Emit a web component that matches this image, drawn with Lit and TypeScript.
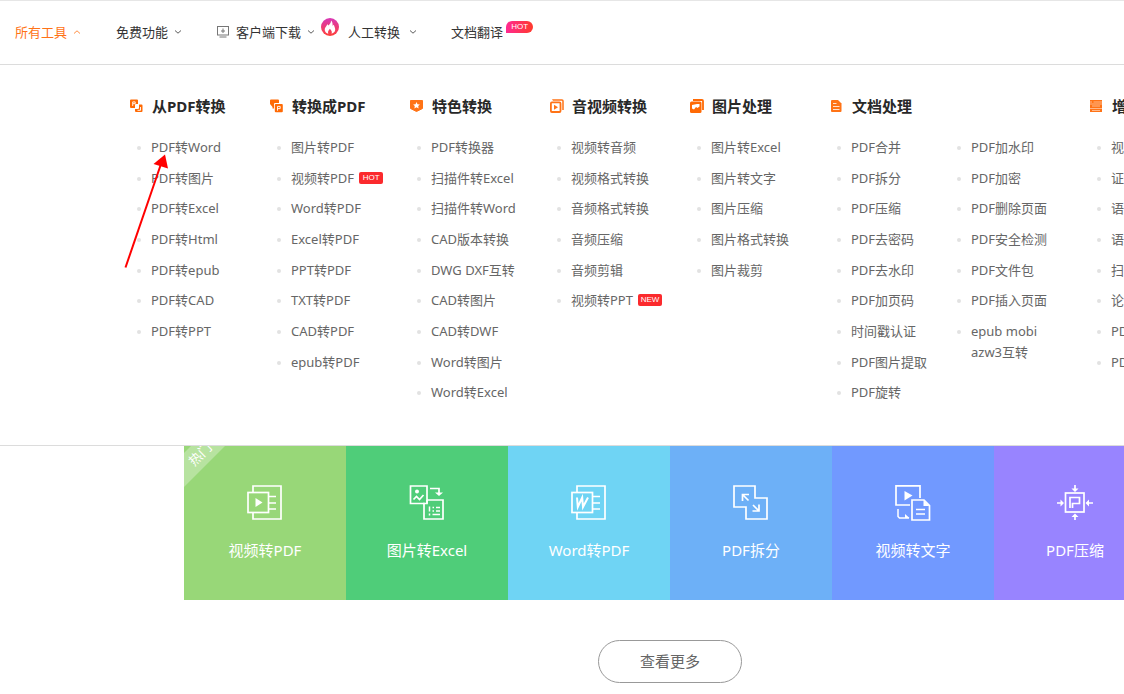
import { LitElement, html, svg, css, nothing, TemplateResult } from "lit";
import { customElement, property } from "lit/decorators.js";

interface MenuLink {
  label: string;
  tag?: string;
}

interface MenuColumn {
  title: string;
  icon: TemplateResult;
  lists: MenuLink[][];
}

interface Tile {
  label: string;
  tone: string;
  icon: TemplateResult;
  ribbon?: string;
}

const links = (...labels: string[]): MenuLink[] =>
  labels.map((entry) => {
    const [label, tag] = entry.split("|");
    return { label, tag };
  });

const glyph = (body: TemplateResult) => html`
  <svg width="14" height="14" viewBox="0 0 14 14" fill="none" aria-hidden="true">${body}</svg>
`;

const columns: MenuColumn[] = [
  {
    title: "从PDF转换",
    icon: glyph(svg`
      <path d="M1 .5h6a1 1 0 0 1 1 1V5H6a1 1 0 0 0-1 1v3H1a1 1 0 0 1-1-1V1.500a1 1 0 0 1 1-1z" fill="#ff6a05"/>
      <path d="M2.700 7V2.900h2.500v1.800H3" stroke="#fff" stroke-width=".9"/>
      <path d="M9 5.500h2.500a1 1 0 0 1 1 1V12a1 1 0 0 1-1 1H6a1 1 0 0 1-1-1v-2h3a1 1 0 0 0 1-1z" fill="#ff6a05"/>
      <path d="M7.500 11.300h3V8" stroke="#fff" stroke-width=".9"/>`),
    lists: [links("PDF转Word", "PDF转图片", "PDF转Excel", "PDF转Html", "PDF转epub", "PDF转CAD", "PDF转PPT")],
  },
  {
    title: "转换成PDF",
    icon: glyph(svg`
      <path d="M1 .5h7a1 1 0 0 1 1 1V4H5a1 1 0 0 0-1 1v4.500H2.500V8L0 5V1.500a1 1 0 0 1 1-1z" fill="#ff6a05"/>
      <path d="M5.800 5h6a1 1 0 0 1 1 1v6.200a1 1 0 0 1-1 1h-6a1 1 0 0 1-1-1V6a1 1 0 0 1 1-1z" fill="#ff6a05"/>
      <path d="M7.500 11.700V7.400h2.700v2.200H7.700" stroke="#fff" stroke-width=".9"/>`),
    lists: [
      links("图片转PDF", "视频转PDF|HOT", "Word转PDF", "Excel转PDF", "PPT转PDF", "TXT转PDF", "CAD转PDF", "epub转PDF"),
    ],
  },
  {
    title: "特色转换",
    icon: glyph(svg`
      <path d="M.5 1.500h12v8L6.500 12.500 .5 9.500z" fill="#ff7316" stroke="#ff7316" stroke-linejoin="round"/>
      <path d="m6.500 3 1 2.200 2.400.3-1.700 1.600.4 2.300-2.100-1.100-2.100 1.100.4-2.300-1.700-1.600 2.400-.3z" fill="#fff"/>`),
    lists: [
      links("PDF转换器", "扫描件转Excel", "扫描件转Word", "CAD版本转换", "DWG DXF互转", "CAD转图片", "CAD转DWF", "Word转图片", "Word转Excel"),
    ],
  },
  {
    title: "音视频转换",
    icon: glyph(svg`
      <path d="M3 1.200V1h9a1 1 0 0 1 1 1v9" stroke="#ff7316" stroke-width="1.500"/>
      <rect x=".9" y="3.400" width="9.600" height="9.600" rx="1" stroke="#ff7316" stroke-width="1.800"/>
      <path d="m4 5.700 4 2.500-4 2.500z" fill="#ff7316"/>`),
    lists: [links("视频转音频", "视频格式转换", "音频格式转换", "音频压缩", "音频剪辑", "视频转PPT|NEW")],
  },
  {
    title: "图片处理",
    icon: glyph(svg`
      <path d="M3 1h9a1 1 0 0 1 1 1v9" stroke="#ff6a05" stroke-width="1.800"/>
      <rect y="2.600" width="11.500" height="11.400" rx="1.500" fill="#ff6a05"/>
      <path d="M2 6 7 5h2.500v2.500L7.500 9 6 8 4 10.500 2 9.500z" fill="#fff"/>`),
    lists: [links("图片转Excel", "图片转文字", "图片压缩", "图片格式转换", "图片裁剪")],
  },
  {
    title: "文档处理",
    icon: glyph(svg`
      <path d="M2 1h6l3.500 3.500V12a1 1 0 0 1-1 1H2a1 1 0 0 1-1-1V2a1 1 0 0 1 1-1z" fill="#ff7316"/>
      <path d="M3 4.500h3.500M3 7.500h6.500M3 10.500h6.500" stroke="#fff" stroke-opacity=".8"/>`),
    lists: [
      links("PDF合并", "PDF拆分", "PDF压缩", "PDF去密码", "PDF去水印", "PDF加页码", "时间戳认证", "PDF图片提取", "PDF旋转"),
      links("PDF加水印", "PDF加密", "PDF删除页面", "PDF安全检测", "PDF文件包", "PDF插入页面", "epub mobi azw3互转"),
    ],
  },
  {
    title: "增",
    icon: glyph(svg`
      <path d="M0 1h12v3.700H0zM0 5.300h12V9H0zM0 9.500h12V13H0z" fill="#ff7316"/>
      <path d="M0 3h2M3.500 3H12M2 7h8M2 11.500h8" stroke="#fff" stroke-opacity=".5"/>`),
    lists: [links("视", "证", "语", "语", "扫", "论", "PDF", "PDF")],
  },
];

const picture = (body: TemplateResult) => html`
  <svg width="36" height="36" viewBox="0 0 36 36" fill="none" stroke="#fff" stroke-width="1.700" aria-hidden="true">
    ${body}
  </svg>
`;

const tiles: Tile[] = [
  {
    label: "视频转PDF",
    tone: "lime",
    ribbon: "热门",
    icon: picture(svg`
      <path d="M6 7V1h28v33H6v-6"/><rect x="1" y="7.500" width="20.500" height="20"/>
      <path d="M22 11.500h7M22 18h7M22 24h7"/><path d="m8.500 13 7 4.500-7 4.500z" fill="#fff" stroke="none"/>`),
  },
  {
    label: "图片转Excel",
    tone: "green",
    icon: picture(svg`
      <path d="M14 18.500H1.500V1H18v17.500M18 15h16v19H15V18.500H14"/><path d="M14 18.500h4V15"/>
      <circle cx="8" cy="6.500" r="2" fill="#fff" stroke="none"/><path d="m4.500 14.500 3-3 3 3 4-4.500"/>
      <path d="M21 3.500h9V8"/><path d="M26 7.500h8L30 11z" fill="#fff" stroke="none"/>
      <path d="M20.500 21.500v5M20.500 28.500v2" stroke-width="1.500"/><path d="M23.500 22.500H25M27 22.500h4M23.500 26H25M27 26h4M23.500 29.500H31" stroke-width="1.500"/>`),
  },
  {
    label: "Word转PDF",
    tone: "cyan",
    icon: picture(svg`
      <path d="M6 7V1h28v33H6v-6"/><rect x="1" y="7.500" width="20.500" height="20"/>
      <path d="M22 11.500h7M22 18h7M22 24h7"/><path d="M6 12.500l.8 9.500 4.400-9.500.8 9.500 5-9.500" stroke-width="2"/>`),
  },
  {
    label: "PDF拆分",
    tone: "sky",
    icon: picture(svg`
      <path d="M1 1h21v12h12v21H13V22H1z"/>
      <path d="m9.500 9.500 6 6M9.500 16V9.500H16M20 20l6 6M26 19.500V26h-6.500"/>`),
  },
  {
    label: "视频转文字",
    tone: "blue",
    icon: picture(svg`
      <path d="M15 20H1V.8h24V13"/><path d="m9.500 6 8 4.500-8 5z" fill="#fff" stroke="none"/>
      <path d="M17 15h12l5.500 5.500V35H17z"/><path d="M28.500 15v6h6z" fill="#fff" stroke="none"/>
      <path d="M21 24.500h9M21 29h9M3 24v7.500L4.500 33H14" stroke-width="1.500"/><path d="M10 29v4h4.500z" fill="#fff" stroke="none"/>`),
  },
  {
    label: "PDF压缩",
    tone: "violet",
    icon: picture(svg`
      <rect x="8.500" y="8" width="18.500" height="19"/><path d="M13 23V12.500h9.500v6h-7V23"/>
      <path d="M18 0v4M18 35v-4M0 18h4M36 18h-4"/>
      <path d="M14.500 3.500h7L18 7zM14.500 32h7L18 28.500zM3.500 14.500v7L7 18zM32 14.500v7L28.500 18z" fill="#fff" stroke="none"/>`),
  },
];

const reset = css`
  * {
    box-sizing: border-box;
  }
  a {
    color: inherit;
    text-decoration: none;
  }
  ul {
    margin: 0;
    padding: 0;
    list-style: none;
  }
  svg {
    display: block;
    flex: none;
  }
`;

@customElement("site-nav")
export class SiteNav extends LitElement {
  static styles = [
    reset,
    css`
      :host {
        display: block;
        border-top: 1px solid #e6e6e6;
        border-bottom: 1px solid #dcdcdc;
      }
      .nav {
        display: flex;
        align-items: center;
        height: 63px;
        padding: 0 0 2px 15px;
        font-size: 13px;
        line-height: 20px;
        color: #333;
        white-space: nowrap;
      }
      .nav li {
        margin-right: 35px;
      }
      .nav .close {
        display: flex;
        align-items: center;
        gap: 6px;
        margin-right: 9px;
      }
      .nav a {
        display: flex;
        align-items: center;
        gap: 6px;
      }
      .nav .wide {
        margin-right: 34px;
      }
      .nav .wide a {
        gap: 9px;
      }
      .nav .translate {
        display: flex;
        gap: 3px;
        margin: 0;
      }
      .active {
        color: #ff7316;
      }
      .flame {
        margin-bottom: 10px;
      }
      .hot {
        width: 27px;
        height: 12px;
        margin-top: -1px;
        border-radius: 6px 6px 6px 0;
        background: linear-gradient(90deg, #ff2a92, #ff3a2c);
        color: #fff;
        font: 8px/12px "Liberation Sans", sans-serif;
        text-align: center;
      }
    `,
  ];

  private chevron(up = false) {
    return html`<svg width="8" height="6" viewBox="0 0 8 6" fill="none" stroke="currentColor" stroke-opacity=".8">
      <path d=${up ? "M1 4.500 4 1.800l3 2.700" : "M1 1.500 4 4.200l3-2.700"} />
    </svg>`;
  }

  render() {
    return html`
      <nav>
        <ul class="nav">
          <li class="active"><a href="#">所有工具${this.chevron(true)}</a></li>
          <li><a href="#">免费功能${this.chevron()}</a></li>
          <li class="close">
            <a href="#">
              <svg width="13" height="12" viewBox="0 0 13 12" fill="none" stroke="#777">
                <rect x=".5" y=".5" width="11" height="8.500" />
                <path d="M6 2.500v4.500M4 5h4M2.500 11h7" />
              </svg>
              客户端下载${this.chevron()}
            </a>
            <svg class="flame" width="18" height="18" viewBox="0 0 18 18" aria-hidden="true">
              <defs>
                <linearGradient id="heat" x2="0" y2="1">
                  <stop stop-color="#d837b8" />
                  <stop offset="1" stop-color="#ff4038" />
                </linearGradient>
              </defs>
              <circle cx="9" cy="9" r="9" fill="url(#heat)" />
              <path
                d="M10 2.500c.2 2-1.200 3.500-2.300 5L6.200 6.200C5.700 8.200 3.500 9.500 3.700 12c.2 2 1.700 3.200 3.600 3.700-.8-2 .2-3.500 1.600-5 1.500 1.500 2.400 3 1.700 5 2-.5 3.500-1.900 3.600-3.900.1-2-1-3-1.300-5l-1.300 1c.2-2.200-.2-4.200-1.600-5.300z"
                fill="#fff"
              />
            </svg>
          </li>
          <li class="wide"><a href="#">人工转换${this.chevron()}</a></li>
          <li class="translate"><a href="#">文档翻译</a><span class="hot">HOT</span></li>
        </ul>
      </nav>
    `;
  }
}

@customElement("tool-menu")
export class ToolMenu extends LitElement {
  static styles = [
    reset,
    css`
      :host {
        display: flex;
        position: relative;
        z-index: 1;
        padding: 30px 0 32px 130px;
        background: #fff;
        border-bottom: 1px solid #dcdcdc;
      }
      .column {
        flex: none;
        min-width: 140px;
      }
      .title {
        display: flex;
        align-items: center;
        gap: 8px;
        margin: 0 0 20px;
        font-size: 15px;
        line-height: 22px;
        font-weight: 700;
        color: #282828;
        white-space: nowrap;
      }
      .lists {
        display: flex;
      }
      .list {
        display: grid;
        grid-template-rows: repeat(9, minmax(0, 1fr));
        width: 120px;
        height: 276px;
      }
      .list:last-child {
        width: 140px;
      }
      .item {
        display: flex;
        align-items: flex-start;
        gap: 10px;
        padding-left: 7px;
        font-size: 13px;
        line-height: 21px;
        color: #666;
      }
      .item::before {
        content: "";
        flex: none;
        width: 4px;
        height: 4px;
        margin-top: 9px;
        border-radius: 50%;
        background: #e2e2e2;
      }
      .link {
        max-width: 90px;
      }
      .tag {
        flex: none;
        width: 24px;
        margin: 4px 0 0 -5px;
        border-radius: 2px;
        background: #fb2a2d;
        color: #fff;
        font: 8px/12px "Liberation Sans", sans-serif;
        text-align: center;
      }
    `,
  ];

  render() {
    return columns.map(
      (column) => html`
        <section class="column">
          <h3 class="title">${column.icon}${column.title}</h3>
          <div class="lists">
            ${column.lists.map(
              (list) => html`
                <ul class="list">
                  ${list.map(
                    (entry) => html`
                      <li class="item">
                        <a class="link" href="#">${entry.label}</a>
                        ${entry.tag ? html`<span class="tag">${entry.tag}</span>` : nothing}
                      </li>
                    `
                  )}
                </ul>
              `
            )}
          </div>
        </section>
      `
    );
  }
}

@customElement("tool-tile")
export class ToolTile extends LitElement {
  @property({ attribute: false }) tile!: Tile;

  static styles = [
    reset,
    css`
      :host {
        display: block;
      }
      .tile {
        display: flex;
        flex-direction: column;
        align-items: center;
        gap: 18px;
        position: relative;
        height: 162px;
        padding-top: 47px;
        overflow: hidden;
        color: #fff;
        font-size: 15px;
        line-height: 22px;
      }
      .lime {
        background: #98d778;
      }
      .green {
        background: #4fcd79;
      }
      .cyan {
        background: #6fd4f4;
      }
      .sky {
        background: #6db0f7;
      }
      .blue {
        background: #7199ff;
      }
      .violet {
        background: #9884ff;
      }
      .ribbon {
        position: absolute;
        top: 4px;
        left: -36px;
        width: 104px;
        background: rgba(255, 255, 255, 0.3);
        font-size: 13px;
        line-height: 24px;
        text-align: center;
        transform: rotate(-45deg);
      }
    `,
  ];

  render() {
    const { label, tone, icon, ribbon } = this.tile;
    return html`
      <a class="tile ${tone}" href="#">
        ${ribbon ? html`<span class="ribbon">${ribbon}</span>` : nothing} ${icon}
        <span>${label}</span>
      </a>
    `;
  }
}

@customElement("app-root")
export class AppRoot extends LitElement {
  static styles = [
    reset,
    css`
      :host {
        display: block;
        overflow: hidden;
        background: #fff;
        font-family: "Noto Sans", "Noto Sans CJK SC", sans-serif;
      }
      .page {
        position: relative;
        min-width: 1340px;
        padding-bottom: 11px;
      }
      .tiles {
        display: grid;
        grid-template-columns: repeat(6, 162px);
        justify-content: center;
        margin-top: -8px;
      }
      .more {
        display: block;
        width: 144px;
        margin: 40px auto 0;
        padding: 10px 0;
        border: 1px solid #999;
        border-radius: 22px;
        background: #fff;
        color: #666;
        font: inherit;
        font-size: 15px;
        line-height: 21px;
      }
      .pointer {
        position: absolute;
        top: 150px;
        left: 120px;
        z-index: 2;
        pointer-events: none;
      }
    `,
  ];

  render() {
    return html`
      <div class="page">
        <site-nav></site-nav>
        <tool-menu></tool-menu>
        <div class="tiles">${tiles.map((tile) => html`<tool-tile .tile=${tile}></tool-tile>`)}</div>
        <button class="more" type="button">查看更多</button>
        <svg class="pointer" width="52" height="120" viewBox="0 0 52 120" aria-hidden="true">
          <path d="M5.500 117.500 41 14" stroke="#f00" stroke-width="2" />
          <path d="m45 4.500 3 14-14.500-4.500z" fill="#f00" />
        </svg>
      </div>
    `;
  }
}
